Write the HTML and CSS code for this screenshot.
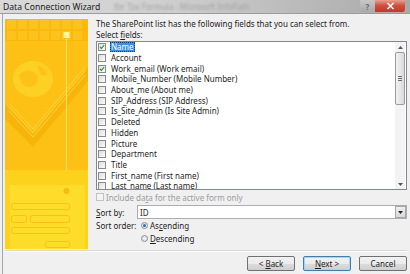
FILE: index.html
```html
<!DOCTYPE html>
<html>
<head>
<meta charset="utf-8">
<link rel="stylesheet" href="styles.css">
</head>
<body>
<div class="window">
  <div class="titlebar">
    <span class="title">Data Connection Wizard</span>
    <span class="ghost">for Tax Formula - Microsoft InfoPath</span>
    <div class="tb-buttons">
      <span class="help">?</span>
      <span class="close"><svg width="9" height="8" viewBox="0 0 9 8"><path d="M1.5 1 L7.5 7 M7.5 1 L1.5 7" stroke="#fff" stroke-width="1.6"/></svg></span>
    </div>
  </div>
  <div class="body">
    <div class="content">
      <div class="art">
        <svg width="83" height="230" viewBox="0 0 83 230">
          <rect width="83" height="230" fill="#fcc114"/>
          <rect x="0" y="0" width="83" height="22" fill="#fbb90e"/>
          <g fill="#fcc31c">
            <rect x="2" y="1" width="9" height="9"/><rect x="13" y="1" width="9" height="9"/><rect x="24" y="1" width="9" height="9"/><rect x="35" y="1" width="9" height="9"/><rect x="46" y="1" width="9" height="9"/><rect x="57" y="1" width="9" height="9"/><rect x="68" y="1" width="9" height="9"/>
            <rect x="2" y="12" width="9" height="9"/><rect x="13" y="12" width="9" height="9"/><rect x="24" y="12" width="9" height="9"/><rect x="35" y="12" width="9" height="9"/><rect x="46" y="12" width="9" height="9"/><rect x="57" y="12" width="9" height="9"/><rect x="68" y="12" width="9" height="9"/>
          </g>
          <path d="M0 85 L28 115 L83 48 L83 62 L28 128 L0 100 Z" fill="#f7b50c"/>
          <path d="M4 84 L28 110 L80 48" fill="none" stroke="#fdd33a" stroke-width="1"/>
          <path d="M4 88 L28 114 L80 52" fill="none" stroke="#fdd33a" stroke-width="1"/>
          <path d="M4 92 L28 118 L80 56" fill="none" stroke="#fdd33a" stroke-width="1"/>
          <ellipse cx="28" cy="60" rx="20" ry="18" fill="#fdd026"/>
          <path d="M14 56 Q22 48 30 54 Q36 60 30 66 Q22 70 16 64 Z" fill="#fcc21a"/>
          <path d="M32 46 Q40 48 42 56 L36 56 Z" fill="#fcc21a"/>
          <line x1="61.5" y1="20" x2="61.5" y2="205" stroke="#fedf58" stroke-width="1"/>
          <rect x="58.5" y="13" width="6" height="6" fill="#fff4a8"/>
          <rect x="0" y="151" width="83" height="79" fill="#fdd21c"/>
          <rect x="5" y="166" width="75" height="64" fill="#fedc2a"/>
          <g fill="none" stroke="#f8c20e" stroke-width="1">
            <rect x="6.5" y="184.5" width="58" height="6" rx="2"/>
            <rect x="6.5" y="196.5" width="15" height="7" rx="2"/>
            <rect x="25.5" y="196.5" width="39" height="7" rx="2"/>
            <rect x="6.5" y="208.5" width="58" height="6" rx="2"/>
            <rect x="40.5" y="222.5" width="24" height="6" rx="2"/>
          </g>
          <circle cx="61.5" cy="172" r="3" fill="#f5bb10"/>
        </svg>
      </div>
      <div class="main">
        <div class="intro">The SharePoint list has the following fields that you can select from.</div>
        <div class="label">Select <u>f</u>ields:</div>
        <div class="listbox">
          <div class="items">
            <div class="item"><span class="cb checked"><svg width="8" height="8" viewBox="0 0 8 8"><path d="M1.3 4 L3.2 6 L6.8 1.5" fill="none" stroke="#2f8f2f" stroke-width="1.5"/></svg></span><span class="sel">Name</span></div>
            <div class="item"><span class="cb"></span><span>Account</span></div>
            <div class="item"><span class="cb checked"><svg width="8" height="8" viewBox="0 0 8 8"><path d="M1.3 4 L3.2 6 L6.8 1.5" fill="none" stroke="#2f8f2f" stroke-width="1.5"/></svg></span><span>Work_email (Work email)</span></div>
            <div class="item"><span class="cb"></span><span>Mobile_Number (Mobile Number)</span></div>
            <div class="item"><span class="cb"></span><span>About_me (About me)</span></div>
            <div class="item"><span class="cb"></span><span>SIP_Address (SIP Address)</span></div>
            <div class="item"><span class="cb"></span><span>Is_Site_Admin (Is Site Admin)</span></div>
            <div class="item"><span class="cb"></span><span>Deleted</span></div>
            <div class="item"><span class="cb"></span><span>Hidden</span></div>
            <div class="item"><span class="cb"></span><span>Picture</span></div>
            <div class="item"><span class="cb"></span><span>Department</span></div>
            <div class="item"><span class="cb"></span><span>Title</span></div>
            <div class="item"><span class="cb"></span><span>First_name (First name)</span></div>
            <div class="item"><span class="cb"></span><span>Last_name (Last name)</span></div>
          </div>
          <div class="scrollbar">
            <div class="arrow"><svg width="5" height="3" viewBox="0 0 5 3"><path d="M0 3 L2.5 0 L5 3 Z" fill="#555"/></svg></div>
            <div class="thumb"><span></span><span></span><span></span></div>
            <div class="track"></div>
            <div class="arrow"><svg width="5" height="3" viewBox="0 0 5 3"><path d="M0 0 L2.5 3 L5 0 Z" fill="#555"/></svg></div>
          </div>
        </div>
        <div class="include"><span class="cb disabled"></span><span>Include da<u>t</u>a for the active form only</span></div>
        <div class="sortby">
          <span class="lbl"><u>S</u>ort by:</span>
          <div class="combo"><span class="val">ID</span><span class="drop"><svg width="5" height="3" viewBox="0 0 5 3"><path d="M0 0 L2.5 3 L5 0 Z" fill="#222"/></svg></span></div>
        </div>
        <div class="sortorder">
          <span class="lbl">Sort order:</span>
          <div class="radios">
            <div class="radio"><span class="rb on"></span><span>As<u>c</u>ending</span></div>
            <div class="radio"><span class="rb"></span><span><u>D</u>escending</span></div>
          </div>
        </div>
      </div>
    </div>
    <div class="footer">
      <button class="btn">&lt; <u>B</u>ack</button>
      <button class="btn default"><u>N</u>ext &gt;</button>
      <button class="btn">Cancel</button>
    </div>
  </div>
</div>
</body>
</html>
```

FILE: styles.css
```css
* { box-sizing: border-box; }
html, body { margin: 0; padding: 0; }
body {
  width: 410px;
  height: 274px;
  overflow: hidden;
  background: #f0f0f0;
  font-family: "Noto Sans", "Open Sans", sans-serif;
  font-size: 8px;
  color: #1e1e1e;
}
u { text-decoration: underline; text-underline-offset: 1px; }

.window { display: flex; flex-direction: column; width: 410px; height: 274px; }

.titlebar {
  height: 14px;
  display: flex;
  align-items: center;
  padding-left: 3px;
  background: linear-gradient(90deg, #d9d9d9 0%, #cfcfcf 40%, #b9b9b9 75%, #a9a9a9 100%);
  border-bottom: 1px solid #9c9c9c;
  position: relative;
}
.title { font-size: 8.6px; color: #1a1a1a; }
.ghost { margin-left: 14px; font-size: 8px; color: #a4a4a4; filter: blur(1.2px); }
.tb-buttons { position: absolute; right: 5px; top: 0; display: flex; }
.help {
  width: 15px; height: 12px;
  display: flex; align-items: center; justify-content: center;
  background: linear-gradient(#c8c8c8, #a9a9a9);
  color: #6d6d6d; font-size: 8px; font-weight: bold;
  border-radius: 0 0 0 3px;
}
.close {
  width: 30px; height: 12px;
  display: flex; align-items: center; justify-content: center;
  background: linear-gradient(#e8a093 0%, #d4503d 45%, #c2372a 100%);
  border-radius: 0 0 3px 0;
}

.body {
  flex: 1;
  display: flex;
  flex-direction: column;
  margin-left: 2px;
  border-left: 1px solid #a6a6a6;
}
.content { display: flex; padding: 5px 3px 0 2px; height: 235px; }
.art { width: 83px; height: 230px; flex: none; }
.art svg { display: block; }
.main { margin-left: 8px; flex: 1; display: flex; flex-direction: column; }

.intro { height: 10px; line-height: 10px; }
.label { height: 10px; line-height: 10px; margin-top: 1px; }

.listbox {
  margin-top: 1px;
  height: 149px;
  border: 1px solid #828790;
  background: #fff;
  display: flex;
  overflow: hidden;
}
.items { flex: 1; padding-left: 1px; }
.item { height: 10.7px; display: flex; align-items: center; white-space: nowrap; }
.item .cb { margin-right: 4px; }
.item span:last-child { padding: 0 1px; line-height: 10px; }
.sel { background: #3f8fe3; color: #fff; outline: 1px dotted #1a3a6a; outline-offset: -1px; }

.cb {
  width: 8px; height: 8px; flex: none;
  border: 1px solid #8a8a8a;
  background: linear-gradient(135deg, #dedede, #fbfbfb);
  display: inline-flex; align-items: center; justify-content: center;
}
.cb svg { display: block; }
.cb.disabled { border-color: #c2c2c2; background: #f4f4f4; }

.scrollbar {
  width: 10px; flex: none;
  display: flex; flex-direction: column;
  background: #f3f3f3;
  margin-right: 1px;
}
.arrow { height: 10px; display: flex; align-items: center; justify-content: center; }
.thumb {
  height: 53px;
  border: 1px solid #9b9b9b;
  border-radius: 2px;
  background: linear-gradient(90deg, #f2f2f2, #dadada);
  display: flex; flex-direction: column; align-items: center; justify-content: center; gap: 1px;
}
.thumb span { width: 4px; height: 1px; background: #6e6e6e; }
.track { flex: 1; }

.include { height: 14px; display: flex; align-items: center; color: #9c9c9c; }
.include .cb { margin-right: 2px; }

.sortby { height: 14px; margin-top: 1px; display: flex; align-items: center; }
.lbl { width: 41px; flex: none; }
.combo {
  flex: 1; height: 14px;
  border: 1px solid #abadb3;
  background: #fff;
  display: flex; align-items: center;
  padding-left: 2px;
}
.val { flex: 1; }
.drop {
  width: 11px; height: 12px; margin-right: 0;
  border: 1px solid #a7a7a7;
  background: linear-gradient(#f0f0f0, #d8d8d8);
  display: flex; align-items: center; justify-content: center;
}

.sortorder { display: flex; }
.sortorder .lbl { height: 13px; line-height: 13px; width: 45px; }
.radios { display: flex; flex-direction: column; }
.radio { height: 13px; display: flex; align-items: center; }
.rb {
  width: 7px; height: 7px; border-radius: 50%;
  border: 1px solid #8e8f8f;
  background: radial-gradient(#f6f6f6, #d4d4d4);
  margin-right: 2px;
  display: inline-flex; align-items: center; justify-content: center;
}
.rb.on::after { content: ""; width: 3px; height: 3px; border-radius: 50%; background: #2a6bc4; }

.footer {
  flex: 1;
  margin: 1px 3px 0 2px;
  border-top: 1px solid #d7d7d7;
  box-shadow: inset 0 1px 0 #fff;
  display: flex;
  justify-content: flex-end;
  align-items: flex-start;
  padding-top: 5px;
  gap: 8px;
}
.btn {
  width: 48px; height: 15px;
  font-family: inherit; font-size: 8px; color: #1e1e1e;
  border: 1px solid #707070;
  border-radius: 2px;
  background: linear-gradient(#f2f2f2 0%, #ebebeb 50%, #dddddd 51%, #cfcfcf 100%);
  padding: 0;
  line-height: 12px;
}
.btn.default { border-color: #3c7fb1; box-shadow: inset 0 0 0 1px #a6d5f5; }
```
